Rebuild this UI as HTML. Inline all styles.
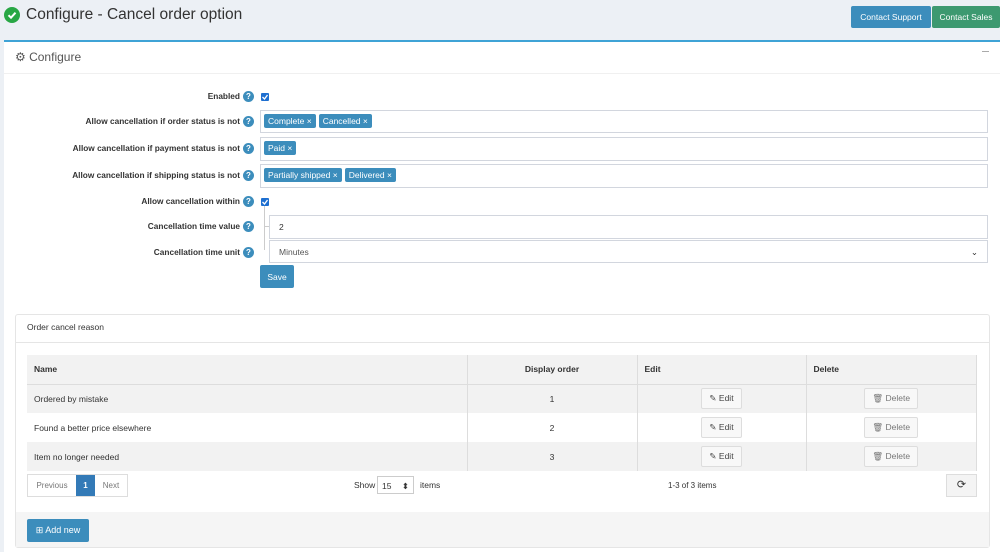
<!DOCTYPE html>
<html><head><style>
*{box-sizing:border-box;margin:0;padding:0}
body{width:1000px;height:552px;background:#ecf0f5;font-family:"Liberation Sans",sans-serif;color:#333;position:relative;overflow:hidden;font-size:9px}
.abs{position:absolute}
.title{left:26px;top:6px;font-size:15.5px;color:#333}
.chk{left:4px;top:7px;width:16px;height:16px;border-radius:50%;background:#28a745}
.btn{position:absolute;color:#fff;font-size:8.5px;display:flex;align-items:center;justify-content:center;border-radius:2px}
.card{left:4px;top:40px;width:996px;height:512px;background:#fff;border-top:2px solid #3fa3d6}
.lbl{position:absolute;right:760px;font-weight:bold;font-size:8.3px;color:#333;text-align:right;white-space:nowrap}
.q{position:absolute;left:243px;width:11px;height:11px;border-radius:50%;background:#3c8dbc;color:#fff;font-size:8px;font-weight:bold;text-align:center;line-height:11px}
.inp{position:absolute;left:260px;width:728px;border:1px solid #d2d6de;background:#fff}
.tag{display:inline-block;background:#3c8dbc;color:#fff;font-size:8.5px;padding:2px 4px;margin:3px 0 0 3px;border-radius:2px}
.cb{position:absolute;left:261px;width:8px;height:8px;background:#1e6fd0;border-radius:1px}
table{border-collapse:collapse;position:absolute;left:27px;top:355px;width:950px}
td,th{font-size:8.5px;border-right:1px solid #ddd;padding:0 7px;height:29px;text-align:left}
th{background:#f2f2f2;font-weight:bold;border-bottom:1px solid #ddd}
tr.g td{background:#f2f2f2}
.c{text-align:center}
.sb{display:inline-block;border:1px solid #ddd;background:#f8f8f8;border-radius:2px;padding:4px 7px;color:#444}
</style></head><body>
<div class="abs chk"><svg width="16" height="16"><path d="M4.5 8.2l2.5 2.5 4.5-5" stroke="#fff" stroke-width="2" fill="none"/></svg></div>
<div class="abs title">Configure - Cancel order option</div>
<div class="btn" style="left:851px;top:6px;width:80px;height:22px;background:#3c8dbc">Contact Support</div>
<div class="btn" style="left:932px;top:6px;width:68px;height:22px;background:#3d9970">Contact Sales</div>
<div class="abs card"></div>
<div class="abs" style="left:4px;top:73px;width:996px;height:1px;background:#f0f0f0"></div>
<div class="abs" style="left:15px;top:50px;font-size:12px;color:#555">⚙ Configure</div>
<div class="abs" style="left:982px;top:51px;width:7px;height:1px;background:#aaa"></div>

<div class="lbl" style="top:91px">Enabled</div><div class="q" style="top:91px">?</div><div class="cb" style="top:93px"><svg width="8" height="8" style="display:block"><path d="M1.5 4l2 2 3-4" stroke="#fff" stroke-width="1.3" fill="none"/></svg></div>
<div class="lbl" style="top:116px">Allow cancellation if order status is not</div><div class="q" style="top:116px">?</div>
<div class="inp" style="top:110px;height:23px"><span class="tag">Complete ×</span><span class="tag">Cancelled ×</span></div>
<div class="lbl" style="top:143px">Allow cancellation if payment status is not</div><div class="q" style="top:143px">?</div>
<div class="inp" style="top:137px;height:24px"><span class="tag">Paid ×</span></div>
<div class="lbl" style="top:170px">Allow cancellation if shipping status is not</div><div class="q" style="top:170px">?</div>
<div class="inp" style="top:164px;height:24px"><span class="tag">Partially shipped ×</span><span class="tag">Delivered ×</span></div>
<div class="lbl" style="top:196px">Allow cancellation within</div><div class="q" style="top:196px">?</div><div class="cb" style="top:198px"><svg width="8" height="8" style="display:block"><path d="M1.5 4l2 2 3-4" stroke="#fff" stroke-width="1.3" fill="none"/></svg></div>
<div class="abs" style="left:264px;top:206px;width:1px;height:44px;background:#ccc"></div>
<div class="abs" style="left:264px;top:226px;width:5px;height:1px;background:#ccc"></div>
<div class="lbl" style="top:221px">Cancellation time value</div><div class="q" style="top:221px">?</div>
<div class="inp" style="top:215px;height:24px;left:269px;width:719px;padding:6px 9px;font-size:8.5px">2</div>
<div class="lbl" style="top:247px">Cancellation time unit</div><div class="q" style="top:247px">?</div>
<div class="inp" style="top:240px;height:23px;left:269px;width:719px;padding:6px 9px;font-size:8.5px;color:#555">Minutes<span style="float:right;color:#333">⌄</span></div>
<div class="btn" style="left:260px;top:265px;width:34px;height:23px;background:#3c8dbc">Save</div>

<div class="abs" style="left:15px;top:314px;width:975px;height:234px;background:#fff;border:1px solid #e5e5e5;border-radius:3px"></div>
<div class="abs" style="left:27px;top:322px;font-size:8.5px">Order cancel reason</div>
<div class="abs" style="left:16px;top:342px;width:973px;height:1px;background:#e5e5e5"></div>
<table>
<tr><th style="width:440px">Name</th><th class="c" style="width:170px">Display order</th><th style="width:169px">Edit</th><th>Delete</th></tr>
<tr class="g"><td>Ordered by mistake</td><td class="c">1</td><td class="c"><span class="sb">✎ Edit</span></td><td class="c"><span class="sb" style="color:#777">🗑 Delete</span></td></tr>
<tr><td>Found a better price elsewhere</td><td class="c">2</td><td class="c"><span class="sb">✎ Edit</span></td><td class="c"><span class="sb" style="color:#777">🗑 Delete</span></td></tr>
<tr class="g"><td>Item no longer needed</td><td class="c">3</td><td class="c"><span class="sb">✎ Edit</span></td><td class="c"><span class="sb" style="color:#777">🗑 Delete</span></td></tr>
</table>
<div class="abs" style="left:27px;top:474px;height:23px;width:101px;border:1px solid #ddd;display:flex;font-size:8px;color:#777">
<div style="width:48px;line-height:21px;text-align:center">Previous</div>
<div style="width:19px;background:#337ab7;color:#fff;line-height:21px;text-align:center;font-weight:bold">1</div>
<div style="flex:1;line-height:21px;text-align:center">Next</div></div>
<div class="abs" style="left:354px;top:480px;font-size:8.5px">Show</div>
<div class="abs" style="left:377px;top:476px;width:37px;height:18px;border:1px solid #ccc;font-size:8.5px;padding:4px 4px">15 <span style="float:right">⬍</span></div>
<div class="abs" style="left:420px;top:480px;font-size:8.5px">items</div>
<div class="abs" style="left:668px;top:481px;font-size:8px">1-3 of 3 items</div>
<div class="abs" style="left:946px;top:474px;width:31px;height:23px;border:1px solid #ddd;background:#f4f4f4;text-align:center;line-height:21px;font-size:11px">⟳</div>
<div class="abs" style="left:16px;top:512px;width:973px;height:35px;background:#f5f5f5"></div>
<div class="btn" style="left:27px;top:519px;width:62px;height:23px;background:#3c8dbc;font-size:9px">⊞ Add new</div>
</body></html>
